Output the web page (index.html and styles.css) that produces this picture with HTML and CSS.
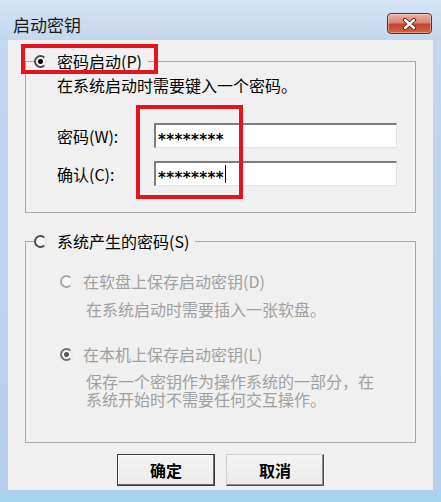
FILE: index.html
```html
<!DOCTYPE html>
<html lang="zh-CN">
<head>
    <meta charset="UTF-8">
    <title>启动密钥</title>
    <link rel="stylesheet" href="styles.css">
</head>
<body>
    <div class="window">
        <div class="titlebar">
            <span class="title">启动密钥</span>
            <button class="close" aria-label="关闭">
                <svg width="15" height="12" viewBox="0 0 15 12">
                    <path d="M3 2 L12 10 M12 2 L3 10" stroke="#5a1a12" stroke-width="4.2" stroke-linecap="round"/>
                    <path d="M3 2 L12 10 M12 2 L3 10" stroke="#fff" stroke-width="2.4" stroke-linecap="round"/>
                </svg>
            </button>
        </div>

        <div class="client">
            <fieldset class="group group-manual">
                <legend><span class="radio checked"></span>密码启动(P)</legend>
                <p class="desc">在系统启动时需要键入一个密码。</p>
                <div class="field-row first">
                    <label>密码(W):</label>
                    <div class="field"><span class="stars">********</span></div>
                </div>
                <div class="field-row">
                    <label>确认(C):</label>
                    <div class="field"><span class="stars">********</span><span class="caret"></span></div>
                </div>
            </fieldset>

            <fieldset class="group group-system">
                <legend><span class="radio"></span>系统产生的密码(S)</legend>
                <div class="option disabled first"><span class="radio"></span>在软盘上保存启动密钥(D)</div>
                <p class="desc sub">在系统启动时需要插入一张软盘。</p>
                <div class="option disabled second"><span class="radio checked"></span>在本机上保存启动密钥(L)</div>
                <p class="desc sub two-line">保存一个密钥作为操作系统的一部分，在<br>系统开始时不需要任何交互操作。</p>
            </fieldset>

            <div class="buttons">
                <button class="btn default">确定</button>
                <button class="btn">取消</button>
            </div>

            <!-- annotation boxes -->
            <div class="mark mark-radio"></div>
            <div class="mark mark-fields"></div>
        </div>
    </div>
</body>
</html>
```

FILE: styles.css
```css
body {
    margin: 0;
    padding: 0;
    font-family: "Noto Sans CJK SC", "Noto Sans", sans-serif;
    font-size: 16px;
    color: #000;
}

.window {
    width: 441px;
    height: 502px;
    box-sizing: border-box;
    padding: 0 8px 12px 8px;
    background: linear-gradient(180deg, #d6e4f4 0%, #c3d7ee 40px, #bcd3ec 60%, #b6cfea 97%, #9fd6ee 100%);
    display: flex;
    flex-direction: column;
}

.titlebar {
    height: 40px;
    display: flex;
    justify-content: space-between;
    align-items: flex-start;
    padding-left: 5px;
}

.title {
    margin-top: 15px;
    line-height: 20px;
    font-size: 17px;
    color: #1a1a1a;
}

.close {
    margin: 13px 1px 0 0;
    width: 45px;
    height: 21px;
    padding: 0;
    border: 1px solid #6b2a22;
    border-radius: 4px;
    background: linear-gradient(180deg, #eab3a5 0%, #dc8572 45%, #c9442f 55%, #d2653f 100%);
    box-shadow: inset 0 0 0 1px rgba(255, 255, 255, 0.35);
    display: flex;
    justify-content: center;
    align-items: center;
}

.client {
    position: relative;
    height: 450px;
    background: #f0f0f0;
    display: flex;
    flex-direction: column;
}

.group {
    margin: 0 17px;
    padding: 0 0 0 8px;
    border: 1px solid #a8a8a8;
    min-width: 0;
}

.group-manual {
    margin-top: 11px;
    padding-bottom: 26px;
}

.group-system {
    margin-top: 18px;
    padding-bottom: 32px;
}

.group legend {
    padding: 0 6px 0 0;
    line-height: 20px;
    display: flex;
    align-items: center;
}

.radio {
    width: 13px;
    height: 13px;
    box-sizing: border-box;
    border-radius: 50%;
    border: 2px solid;
    border-color: #4a4a4a #e6e6e6 #4a4a4a #4a4a4a;
    background: #f7f7f7;
    margin-right: 10px;
    flex: none;
}

.radio.checked {
    background: radial-gradient(circle, #000 0, #000 2px, #f7f7f7 3px);
}

.desc {
    margin: 4px 0 0 23px;
    line-height: 20px;
}

.field-row {
    display: flex;
    align-items: center;
    margin-top: 13px;
}

.field-row.first {
    margin-top: 28px;
}

.field-row label {
    width: 97px;
    padding-left: 23px;
    line-height: 20px;
}

.field {
    width: 243px;
    height: 25px;
    box-sizing: border-box;
    border-top: 2px solid #7d7d7d;
    border-left: 2px solid #7d7d7d;
    border-right: 1px solid #e3e3e3;
    border-bottom: 1px solid #e3e3e3;
    background: #fff;
    display: flex;
    align-items: center;
    padding-left: 2px;
}

.stars {
    font-family: "DejaVu Sans", sans-serif;
    font-weight: bold;
    font-size: 15px;
    letter-spacing: 0.4px;
    line-height: 16px;
    padding-top: 7px;
}

.caret {
    width: 1px;
    height: 18px;
    background: #000;
    margin-left: 1px;
}

.option {
    display: flex;
    align-items: center;
    line-height: 20px;
    padding-left: 26px;
}

.option.first {
    margin-top: 20px;
}

.option.second {
    margin-top: 25px;
}

.disabled,
.desc.sub {
    color: #a0a0a0;
}

.disabled .radio {
    border-color: #a6a6a6 #ececec #a6a6a6 #a6a6a6;
}

.disabled .radio.checked {
    border-color: #707070 #e8e8e8 #707070 #707070;
    background: radial-gradient(circle, #555 0, #555 2px, #f7f7f7 3px);
}

.desc.sub {
    margin: 8px 0 0 52px;
}

.desc.two-line {
    margin-top: 10px;
    font-family: "Liberation Sans", "Noto Sans CJK SC", sans-serif;
    line-height: 18px;
}

.buttons {
    margin-top: 11px;
    display: flex;
    justify-content: center;
    gap: 11px;
}

.btn {
    width: 98px;
    height: 32px;
    padding: 0;
    font-family: "Noto Sans CJK SC", sans-serif;
    font-size: 16px;
    font-weight: bold;
    color: #000;
    background: linear-gradient(180deg, #f4f4f4 0%, #ebebeb 100%);
    border: 1px solid;
    border-color: #d0d0d0 #505050 #505050 #d0d0d0;
    box-shadow: inset -1px -1px 0 #8a8a8a;
}

.btn.default {
    border-color: #3a3a3a;
    box-shadow: inset -1px -1px 0 #6a6a6a, inset 1px 1px 0 #fff;
}

.mark {
    position: absolute;
    box-sizing: border-box;
    border: 4px solid #e3141b;
}

.mark-radio {
    left: 13px;
    top: 4px;
    width: 137px;
    height: 30px;
}

.mark-fields {
    left: 128px;
    top: 65px;
    width: 107px;
    height: 94px;
}
```
